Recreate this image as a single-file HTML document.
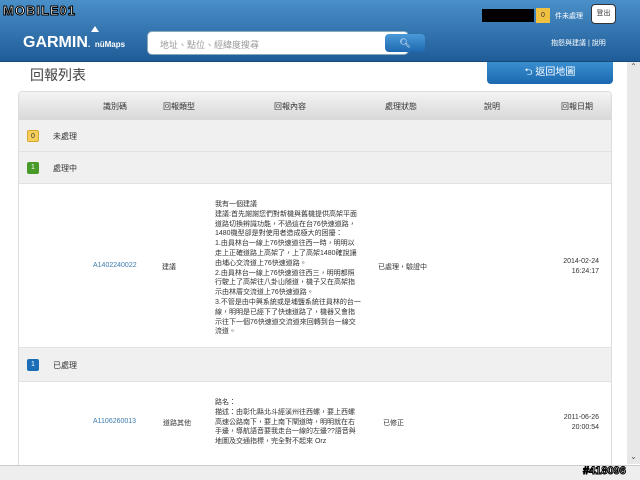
<!DOCTYPE html>
<html><head><meta charset="utf-8"><style>
*{margin:0;padding:0;box-sizing:border-box}
body{width:640px;height:480px;overflow:hidden;background:#fff;font-family:"Liberation Sans","Noto Sans CJK TC",sans-serif;position:relative;color:#333}
.hdr{position:absolute;left:0;top:0;width:640px;height:62px;background:linear-gradient(#4a8fc8,#1f5c98);border-bottom:1px solid #174a7c}
.abs{position:absolute}
.panel{position:absolute;left:18px;top:91px;width:594px;height:380px;border:1px solid #ddd;border-radius:4px;background:#fff;overflow:hidden}
.th{height:28px;background:linear-gradient(#f4f4f4,#d8d8d8);font-size:8px;color:#333;position:relative}
.th span{position:absolute;top:9px}
.grp{height:32px;background:#f0f0f0;border-bottom:1px solid #e2e2e2;position:relative;font-size:8px}
.badge{position:absolute;left:8px;top:10px;width:12px;height:12px;border-radius:2px;font-size:7px;color:#fff;text-align:center;line-height:12px}
.grp .t{position:absolute;left:34px;top:11px}
.row{position:relative;background:#fff;border-bottom:1px solid #e2e2e2;font-size:7px}
.row div{position:absolute}
</style></head><body>
<div class="hdr">
<div class="abs" style="left:3px;top:3px;font:bold 13px 'Liberation Sans';color:#fff;letter-spacing:1px;-webkit-text-stroke:1px #000">MOBILE01</div>
<div class="abs" style="left:23px;top:34px;font:bold 16px 'Liberation Sans';color:#fff">GARMIN<span style="font-size:9px">.</span> <span style="font-size:8px">nüMaps</span></div>
<div class="abs" style="left:91px;top:26px;width:0;height:0;border-left:4px solid transparent;border-right:4px solid transparent;border-bottom:6px solid #fff"></div>
<div class="abs" style="left:147px;top:31px;width:262px;height:24px;background:#fff;border-radius:5px;border:1px solid #8ab"></div>
<div class="abs" style="left:160px;top:38px;font-size:9px;color:#999">地址、點位、經緯度搜尋</div>
<div class="abs" style="left:385px;top:34px;width:40px;height:18px;background:linear-gradient(#4a9ad8,#1f68b0);border-radius:4px;color:#fff;font-size:9px;text-align:center;line-height:18px">🔍︎</div>
<div class="abs" style="left:482px;top:9px;width:52px;height:13px;background:#000"></div>
<div class="abs" style="left:536px;top:8px;width:14px;height:15px;background:#f0c040;color:#333;font-size:7px;text-align:center;line-height:15px">0</div>
<div class="abs" style="left:555px;top:11px;font-size:7px;color:#fff">件未處理</div>
<div class="abs" style="left:591px;top:4px;width:25px;height:20px;background:#fff;border:1px solid #333;border-radius:4px;font-size:7px;text-align:center;line-height:18px">登出</div>
<div class="abs" style="left:551px;top:38px;font-size:7px;color:#fff">抱怨與建議 | 說明</div>
</div>
<div class="abs" style="left:30px;top:65px;font-size:14px;color:#444">回報列表</div>
<div class="abs" style="left:487px;top:62px;width:126px;height:22px;background:linear-gradient(#3a8fd0,#1a68b0);border-radius:0 0 4px 4px;color:#fff;font-size:10px;text-align:center;line-height:22px">⮌ 返回地圖</div>
<div class="panel">
<div class="th"><span style="left:84px">識別碼</span><span style="left:144px">回報類型</span><span style="left:255px">回報內容</span><span style="left:366px">處理狀態</span><span style="left:465px">說明</span><span style="left:542px">回報日期</span></div>
<div class="grp"><div class="badge" style="background:#f6cf5a;color:#333;border:1px solid #d4a830">0</div><div class="t">未處理</div></div>
<div class="grp"><div class="badge" style="background:#4a9a2a">1</div><div class="t">處理中</div></div>
<div class="row" style="height:164px">
<div style="left:74px;top:78px;color:#3a7ab0">A1402240022</div>
<div style="left:143px;top:78px">建議</div>
<div style="left:196px;top:16px;width:146px;line-height:9.8px">我有一個建議<br>建議:首先謝謝您們對新機與舊機提供高架平面道路切換辨識功能，不過這在台76快速道路，1480機型卻是對使用者造成極大的困擾：<br>1.由員林台一線上76快速道往西一時，明明以走上正確道路上高架了，上了高架1480確說讓由埔心交流道上76快速道路。<br>2.由員林台一線上76快速道往西三，明明都照行駛上了高架往八卦山隧道，機子又在高架指示由林厝交流道上76快速道路。<br>3.不管是由中興系統或是埔鹽系統往員林的台一線，明明是已經下了快速道路了，機器又會指示往下一個76快速道交流道來回轉到台一線交流道。</div>
<div style="left:359px;top:78px">已處理，驗證中</div>
<div style="left:535px;top:73px;text-align:right;width:45px;line-height:10px">2014-02-24<br>16:24:17</div>
</div>
<div class="grp" style="height:34px"><div class="badge" style="background:#1a6eb8;top:11px">1</div><div class="t" style="top:12px">已處理</div></div>
<div class="row" style="height:90px">
<div style="left:74px;top:36px;color:#3a7ab0">A1106260013</div>
<div style="left:144px;top:36px">道路其他</div>
<div style="left:196px;top:16px;width:146px;line-height:9.8px">路名：<br>描述：由彰化縣北斗經溪州往西螺，要上西螺高速公路南下，要上南下閘道時，明明就在右手邊，導航語音要我走台一線的左邊??語音與地圖及交通指標，完全對不起來 Orz</div>
<div style="left:364px;top:36px">已修正</div>
<div style="left:535px;top:31px;text-align:right;width:45px;line-height:10px">2011-06-26<br>20:00:54</div>
</div>
</div>
<div class="abs" style="left:627px;top:62px;width:13px;height:402px;background:#e8e8e8"></div>
<div class="abs" style="left:627px;top:62px;width:13px;height:12px;font-size:8px;text-align:center;color:#555">⌃</div>
<div class="abs" style="left:627px;top:452px;width:13px;height:12px;font-size:8px;text-align:center;color:#555">⌄</div>
<div class="abs" style="left:0;top:465px;width:640px;height:15px;background:#eee;border-top:1px solid #ccc"></div>
<div class="abs" style="left:583px;top:465px;font:bold 11px 'Liberation Sans';color:#fff;-webkit-text-stroke:1px #000">#418096</div>
</body></html>
